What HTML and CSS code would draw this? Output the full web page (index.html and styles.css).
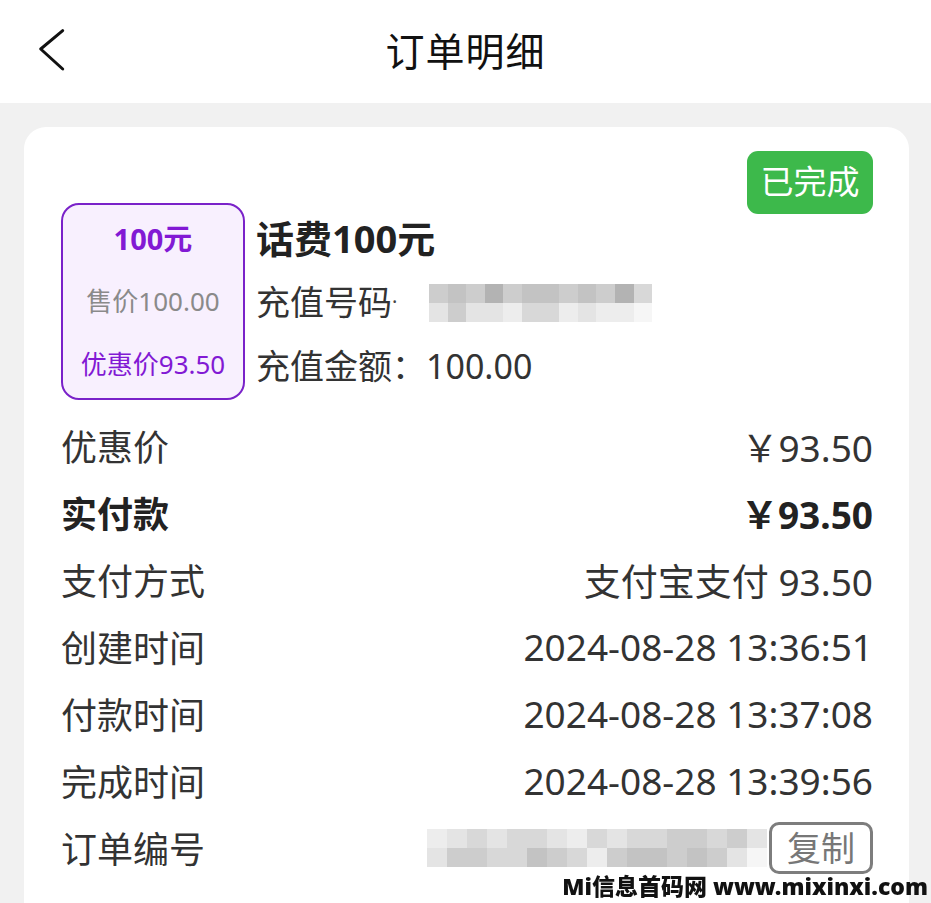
FILE: index.html
```html
<!DOCTYPE html>
<html lang="zh-CN">
  <head>
    <meta charset="UTF-8" />
    <meta name="viewport" content="width=device-width, initial-scale=1.0" />
    <title>订单明细</title>
    <link rel="stylesheet" href="styles.css">
  </head>
  <body>
    <header class="topbar">
      <a class="back" href="#">
        <svg width="28" height="44" viewBox="0 0 28 44">
          <path d="M24.7 2.7 L2.7 21 L24.7 41" fill="none" stroke="#111" stroke-width="3" stroke-linecap="round" stroke-linejoin="round" />
        </svg>
      </a>
      <h1 class="title">订单明细</h1>
      <span></span>
    </header>

    <main class="card">
      <span class="status">已完成</span>

      <div class="product">
        <div class="coupon">
          <div class="face">100元</div>
          <div class="sale">售价100.00</div>
          <div class="deal">优惠价93.50</div>
        </div>
        <div class="info">
          <p class="name">话费100元</p>
          <p class="line">充值号码<span class="dot">·</span>
            <span class="mask phone">
              <i class="g3"></i><i class="g2"></i><i class="g3"></i><i class="g1"></i><i class="g3"></i><i class="g2"></i><i class="g2"></i><i class="g3"></i><i class="g2"></i><i class="g3"></i><i class="g1"></i><i class="g4"></i>
              <i class="g5"></i><i class="g3"></i><i class="g5"></i><i class="g5"></i><i class="g6"></i><i class="g4"></i><i class="g4"></i><i class="g6"></i><i class="g5"></i><i class="g6"></i><i class="g6"></i><i class="g7"></i>
            </span>
          </p>
          <p class="line">充值金额：100.00</p>
        </div>
      </div>

      <div class="rows">
        <div class="row">
          <span>优惠价</span>
          <span class="val">￥93.50</span>
        </div>
        <div class="row total">
          <span>实付款</span>
          <span class="val">￥93.50</span>
        </div>
        <div class="row">
          <span>支付方式</span>
          <span class="val">支付宝支付 93.50</span>
        </div>
        <div class="row">
          <span>创建时间</span>
          <span class="val">2024-08-28 13:36:51</span>
        </div>
        <div class="row">
          <span>付款时间</span>
          <span class="val">2024-08-28 13:37:08</span>
        </div>
        <div class="row">
          <span>完成时间</span>
          <span class="val">2024-08-28 13:39:56</span>
        </div>
        <div class="row">
          <span>订单编号</span>
          <span class="val order">
            <span class="mask number">
              <i class="g6"></i><i class="g5"></i><i class="g4"></i><i class="g5"></i><i class="g4"></i><i class="g4"></i><i class="g5"></i><i class="g6"></i><i class="g4"></i><i class="g5"></i><i class="g4"></i><i class="g4"></i><i class="g3"></i><i class="g3"></i><i class="g4"></i><i class="g3"></i><i class="g5"></i>
              <i class="g5"></i><i class="g3"></i><i class="g3"></i><i class="g4"></i><i class="g4"></i><i class="g2"></i><i class="g3"></i><i class="g4"></i><i class="g6"></i><i class="g3"></i><i class="g2"></i><i class="g2"></i><i class="g3"></i><i class="g2"></i><i class="g3"></i><i class="g5"></i><i class="g7"></i>
            </span>
            <button class="copy">复制</button>
          </span>
        </div>
      </div>
    </main>

    <div class="watermark">Mi信息首码网 www.mixinxi.com</div>
  </body>
</html>
```

FILE: styles.css
```css
body {
  margin: 0;
  background: #f1f1f1;
  font-family: "Noto Sans", "Noto Sans CJK SC", sans-serif;
  color: #333;
  overflow: hidden;
}

p {
  margin: 0;
}

.topbar {
  height: 103px;
  background: #fff;
  display: grid;
  grid-template-columns: 1fr auto 1fr;
  align-items: center;
}

.back {
  display: flex;
  padding-left: 38px;
  padding-bottom: 4px;
}

.title {
  margin: 0;
  padding-bottom: 6px;
  font-size: 39px;
  font-weight: 400;
  color: #111;
  letter-spacing: 1px;
}

.card {
  position: relative;
  margin: 24px 22px 0 24px;
  padding: 76px 36px 40px 37px;
  background: #fff;
  border-radius: 22px 22px 0 0;
}

.status {
  position: absolute;
  top: 24px;
  right: 36px;
  width: 126px;
  height: 63px;
  line-height: 61px;
  text-align: center;
  background: #3db94b;
  color: #fff;
  font-size: 33px;
  border-radius: 11px;
}

.product {
  display: flex;
  gap: 13px;
}

.coupon {
  box-sizing: border-box;
  width: 184px;
  height: 197px;
  padding: 2px 0;
  border: 2px solid #7a22c9;
  border-radius: 18px;
  background: #f8f0fe;
  text-align: center;
  font-size: 26px;
}

.coupon div {
  line-height: 63px;
}

.face {
  font-weight: 700;
  font-size: 29px;
  color: #8219d4;
}

.sale {
  color: #8a8a8a;
}

.deal {
  color: #8219d4;
}

.info {
  margin-top: 3px;
  margin-left: -2px;
}

.name {
  font-size: 38px;
  font-weight: 700;
  line-height: 64px;
  color: #222;
}

.line {
  display: flex;
  align-items: center;
  font-size: 34px;
  line-height: 64px;
}

.dot {
  width: 10px;
  color: #444;
  font-size: 20px;
}

.mask {
  display: grid;
  grid-auto-rows: 19px;
  filter: blur(0.6px);
}

.mask i {
  display: block;
}

.phone {
  margin-left: 27px;
  margin-top: 2px;
  grid-template-columns: repeat(12, 18.6px);
}

.number {
  grid-template-columns: repeat(17, 20px);
  margin-right: 2px;
}

.g1 { background: #b3b3b3; }
.g2 { background: #c3c3c3; }
.g3 { background: #cdcdcd; }
.g4 { background: #d8d8d8; }
.g5 { background: #e4e4e4; }
.g6 { background: #ededed; }
.g7 { background: #f6f6f6; }

.rows {
  margin-top: 12px;
}

.row {
  display: flex;
  justify-content: space-between;
  align-items: center;
  height: 67px;
  font-size: 36px;
}

.row .val {
  font-size: 37px;
}

.total {
  font-weight: 700;
  color: #222;
}

.order {
  display: flex;
  align-items: center;
}

.copy {
  box-sizing: border-box;
  height: 52px;
  padding: 0 15px;
  border: 3px solid #7d7d7d;
  border-radius: 10px;
  background: #fff;
  color: #777;
  font-family: inherit;
  font-size: 34px;
  line-height: 44px;
}

.watermark {
  position: fixed;
  right: 3px;
  bottom: 1px;
  font-size: 23px;
  font-weight: 900;
  color: #111;
}
```
